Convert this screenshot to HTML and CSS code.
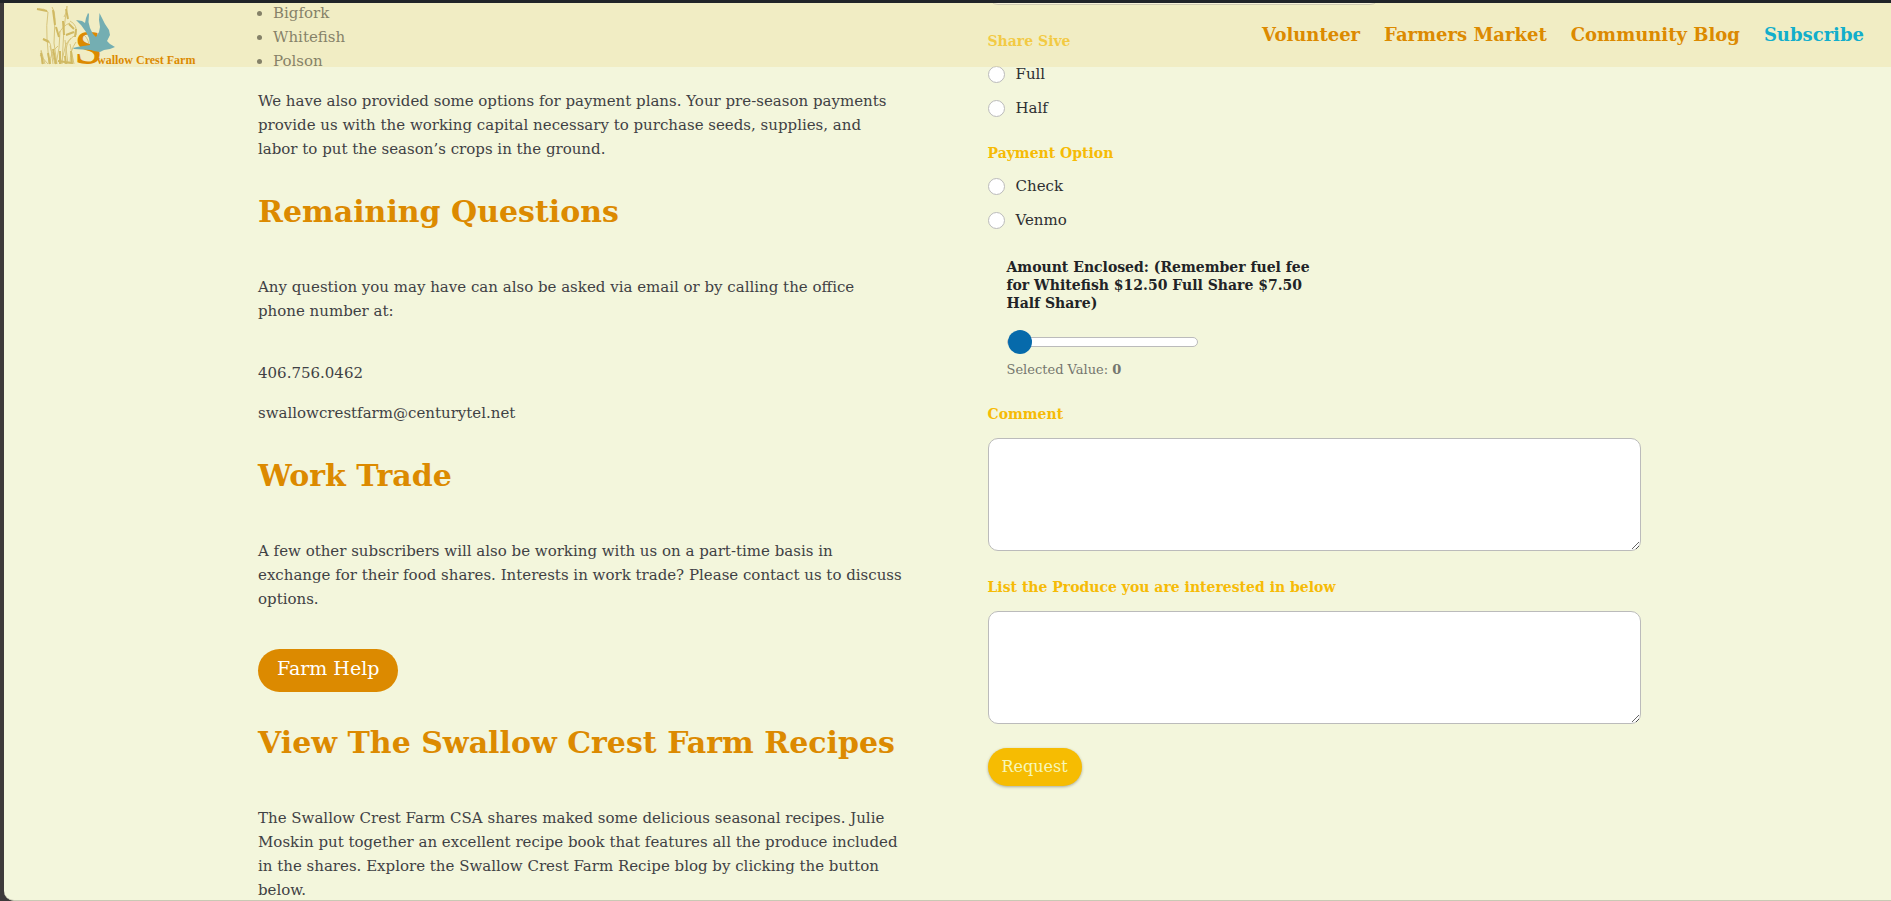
FILE: index.html
```html
<!DOCTYPE html>
<html lang="en">
<head>
<meta charset="utf-8">
<meta name="viewport" content="width=device-width, initial-scale=1">
<title>Swallow Crest Farm – CSA</title>
<link rel="stylesheet" href="styles.css">
</head>
<body>
<div class="page">
  <header class="site-header">
    <a class="logo" href="#" aria-label="Swallow Crest Farm">
      <svg class="logo-art" viewBox="36 3 162 62" role="img" aria-hidden="true">
        <g class="wheat">
          <path d="M39 8q5-1 9 3M52 6q3 4 3 12l-1 24 3 21M67 5l-3 22-2 36M64 16q4-6 3-11M48 11q-2 14-1 26l2 26M43 38q8 0 8 10l2 15M41 50q1 8 1 13M58 34q5-10 12-12M70 20q8 4 6 14M60 30q0 18-4 33M76 34q-9 4-10 15l-1 14M70 63q0-14 6-22M45 63l-4-14M61 63l5-20 5-6M84 34q5 4 5 12M50 63q0-12 8-18M74 63l-4-20M55 63l-5-18M68 63l-3-24M40 54l8 9"/>
          <path class="wheat-ears" d="M37 8l10 2M53 9l2 15M66 8l2 10M56 26l3 10M69 23l5 5M76 28l-1 8M43 38l6 3M66 34l8-3M41 52l2 11M48 52l2 11M53 48l3 15M60 50l0 13M65 55l1 8M71 50l1 13M58 60l14 2M63 20l1 14"/>
        </g>
        <text class="logo-initial" x="75" y="63">S</text>
        <path class="bird" d="M76 19L82 20 85 22 86 17 88 12 89 13 88.500 21 90 27 93 33 96 36 99 31 100 26 99 19 99.500 12 102 17 105 23 109 29 110 34 107 40 110 43 115 46 110 48 104 49 100 51 94 50 91 49 74 48 73 47 77 46 90 44 89 37 86 31 81 24Z"/>
        <text class="logo-name" x="97" y="63">wallow Crest Farm</text>
      </svg>
    </a>
    <nav class="site-nav">
      <a href="#">Volunteer</a>
      <a href="#">Farmers Market</a>
      <a href="#">Community Blog</a>
      <a class="current" href="#">Subscribe</a>
    </nav>
  </header>

  <main class="columns">
    <section class="info">
      <ul>
        <li>Bigfork</li>
        <li>Whitefish</li>
        <li>Polson</li>
      </ul>
      <p>We have also provided some options for payment plans. Your pre-season payments<br>
        provide us with the working capital necessary to purchase seeds, supplies, and<br>
        labor to put the season’s crops in the ground.</p>
      <h2>Remaining Questions</h2>
      <p>Any question you may have can also be asked via email or by calling the office<br>
        phone number at:</p>
      <p class="spaced">406.756.0462</p>
      <p>swallowcrestfarm@centurytel.net</p>
      <h2>Work Trade</h2>
      <p>A few other subscribers will also be working with us on a part-time basis in<br>
        exchange for their food shares. Interests in work trade? Please contact us to discuss<br>
        options.</p>
      <a class="help-button spaced" href="#">Farm Help</a>
      <h2>View The Swallow Crest Farm Recipes</h2>
      <p>The Swallow Crest Farm CSA shares maked some delicious seasonal recipes. Julie<br>
        Moskin put together an excellent recipe book that features all the produce included<br>
        in the shares. Explore the Swallow Crest Farm Recipe blog by clicking the button<br>
        below.</p>
    </section>

    <form class="signup">
      <input class="text-field" type="text" aria-label="Phone">
      <fieldset>
        <legend>Share Sive</legend>
        <label class="choice"><input type="radio" name="share">Full</label>
        <label class="choice"><input type="radio" name="share">Half</label>
      </fieldset>
      <fieldset>
        <legend>Payment Option</legend>
        <label class="choice"><input type="radio" name="payment">Check</label>
        <label class="choice"><input type="radio" name="payment">Venmo</label>
      </fieldset>
      <div class="amount">
        <label for="amount">Amount Enclosed: (Remember fuel fee for Whitefish $12.50 Full Share $7.50 Half Share)</label>
        <input id="amount" type="range" min="0" max="600" value="0">
        <output for="amount">Selected Value: <b>0</b></output>
      </div>
      <div class="field">
        <label for="comment">Comment</label>
        <textarea id="comment"></textarea>
      </div>
      <div class="field">
        <label for="produce">List the Produce you are interested in below</label>
        <textarea id="produce"></textarea>
      </div>
      <button type="submit">Request</button>
    </form>
  </main>
</div>
</body>
</html>
```
FILE: styles.css
```css
* {
  box-sizing: border-box;
}

body {
  margin: 0;
  height: 100vh;
  padding: 3px 0 0 4px;
  overflow: hidden;
  background: linear-gradient(#202428 3px, #3d3a3a 3px);
  color: #3f4144;
  font: 15px/24px "DejaVu Serif", serif;
}

.page {
  position: relative;
  height: 100%;
  overflow: hidden;
  background: #f3f6dc;
  border-bottom: 1px solid #c9c9b4;
  border-bottom-left-radius: 10px;
}

/* Translucent bar that stays above the scrolled content */
.site-header {
  position: absolute;
  z-index: 1;
  inset: 0 0 auto;
  height: 64px;
  padding: 0 27px 0 32px;
  display: flex;
  align-items: center;
  justify-content: space-between;
  background: rgba(238, 226, 160, 0.4);
}

.logo {
  display: flex;
}

.logo-art {
  width: 162px;
  height: 62px;
  overflow: visible;
}

.wheat path {
  fill: none;
  stroke: #d8c57c;
  stroke-width: 1;
}

.wheat .wheat-ears {
  stroke: #d0b962;
  stroke-width: 2;
}

.logo-initial,
.logo-name {
  fill: #dc8a00;
  font-family: "Liberation Serif", serif;
  font-weight: 700;
}

.logo-initial {
  font-size: 48px;
}

.logo-name {
  font-size: 12px;
}

.bird {
  fill: #74aeb2;
}

.site-nav {
  display: flex;
  gap: 24px;
}

.site-nav a {
  color: #dc8a00;
  font-size: 18px;
  font-weight: 700;
  text-decoration: none;
}

.site-nav .current {
  color: #12aecb;
}

.columns {
  display: grid;
  grid-template-columns: minmax(0, 1fr) minmax(0, 1fr);
  gap: 76px;
  padding: 0 250px 0 254px;
}

.info ul {
  margin: -2px 0 0;
  padding-left: 15px;
}

.info p {
  margin: 16px 0 0;
  white-space: nowrap;
}

.info h2 {
  margin: 33px 0 45px;
  color: #dc8a00;
  font-size: 30px;
  line-height: 36px;
}

.info h2 + p {
  margin-top: 0;
}

.info .spaced {
  margin-top: 38px;
}

.help-button {
  display: block;
  width: fit-content;
  padding: 7px 19px 12px;
  border-radius: 22px;
  background: #dc8a00;
  color: #fff;
  font-size: 19px;
  text-decoration: none;
}

.signup {
  color: #2d2f32;
}

.text-field {
  display: block;
  width: 60%;
  height: 44px;
  margin: -42px 0 24px;
  border: 1px solid #bbb;
  border-radius: 10px;
}

fieldset {
  margin: 0 0 21px;
  padding: 0;
  border: 0;
}

legend,
.field label {
  padding: 0;
  color: #f6bb06;
  font-size: 14px;
  font-weight: 700;
}

.choice {
  display: flex;
  align-items: center;
  gap: 11px;
  margin-top: 10px;
}

legend + .choice {
  margin-top: 9px;
}

.choice input {
  appearance: none;
  width: 17px;
  height: 17px;
  margin: 0;
  border: 1px solid #bbb;
  border-radius: 50%;
  background: #fff;
}

.amount {
  display: flex;
  flex-direction: column;
  width: 330px;
  margin-top: 26px;
  padding-left: 19px;
}

.amount label {
  color: #212326;
  font-size: 14px;
  font-weight: 700;
  line-height: 18px;
}

.amount input {
  appearance: none;
  width: 191px;
  height: 10px;
  margin: 25px 0 15px;
  border: 1px solid #bbb;
  border-radius: 5px;
  background: #fff;
}

.amount input::-webkit-slider-thumb {
  appearance: none;
  width: 24px;
  height: 24px;
  border-radius: 50%;
  background: #066aab;
}

.amount output {
  color: #75776f;
  font-size: 13px;
  line-height: 16px;
}

.field {
  display: flex;
  flex-direction: column;
  gap: 12px;
  margin-top: 24px;
}

textarea {
  width: 100%;
  height: 113px;
  border: 1px solid #bbb;
  border-radius: 10px;
  background: #fff;
}

.signup button {
  margin-top: 24px;
  padding: 7px 14px;
  border: 0;
  border-radius: 19px;
  background: #f6bc02;
  box-shadow: 0 1px 3px rgba(0, 0, 0, 0.3);
  color: #f6f7b8;
  font: 16px/24px "DejaVu Serif", serif;
}
```
